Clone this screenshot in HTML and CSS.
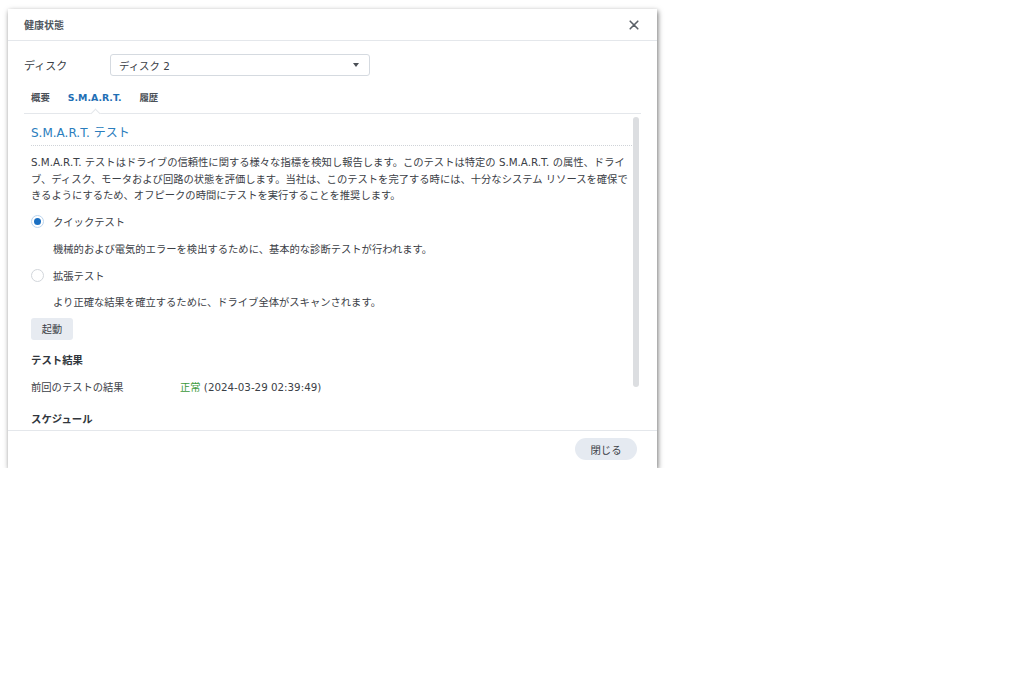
FILE: index.html
```html
<!DOCTYPE html>
<html lang="ja">
<head>
    <meta charset="UTF-8">
    <title>健康状態</title>
    <link rel="stylesheet" href="styles.css">
</head>
<body>
    <div class="dialog">
        <div class="dialog-header">
            <span class="dialog-title">健康状態</span>
            <span class="close">
                <svg width="10" height="10" viewBox="0 0 10 10"><path d="M1.2 1.2L8.8 8.8M8.8 1.2L1.2 8.8" stroke="#5b6168" stroke-width="1.6" stroke-linecap="round"/></svg>
            </span>
        </div>

        <div class="dialog-body">
            <div class="disk-row">
                <span class="disk-label">ディスク</span>
                <div class="select">
                    <span>ディスク 2</span>
                    <span class="caret"></span>
                </div>
            </div>

            <!-- タブ -->
            <div class="tabs">
                <span class="tab">概要</span>
                <span class="tab active">S.M.A.R.T.</span>
                <span class="tab">履歴</span>
            </div>

            <div class="panel-wrap">
                <div class="panel">
                    <div class="section-title">S.M.A.R.T. テスト</div>
                    <p class="desc">S.M.A.R.T. テストはドライブの信頼性に関する様々な指標を検知し報告します。このテストは特定の S.M.A.R.T. の属性、ドライ<br>ブ、ディスク、モータおよび回路の状態を評価します。当社は、このテストを完了する時には、十分なシステム リソースを確保で<br>きるようにするため、オフピークの時間にテストを実行することを推奨します。</p>

                    <div class="radio-row">
                        <span class="radio checked"></span>
                        <span>クイックテスト</span>
                    </div>
                    <div class="radio-desc">機械的および電気的エラーを検出するために、基本的な診断テストが行われます。</div>

                    <div class="radio-row">
                        <span class="radio"></span>
                        <span>拡張テスト</span>
                    </div>
                    <div class="radio-desc">より正確な結果を確立するために、ドライブ全体がスキャンされます。</div>

                    <button class="btn">起動</button>

                    <div class="subhead">テスト結果</div>
                    <div class="field">
                        <span class="field-label">前回のテストの結果</span>
                        <span><span class="ok">正常</span> (2024-03-29 02:39:49)</span>
                    </div>

                    <div class="subhead schedule">スケジュール</div>
                </div>
                <div class="scroll-thumb"></div>
            </div>
        </div>

        <div class="dialog-footer">
            <button class="btn-pill">閉じる</button>
        </div>
    </div>
</body>
</html>
```

FILE: styles.css
```css
body {
    margin: 0;
    padding: 0;
    background-color: #ffffff;
    font-family: "DejaVu Sans", "Noto Sans CJK JP", sans-serif;
    font-size: 10.3px;
    color: #3b4046;
}

.dialog {
    width: 649px;
    height: 459px;
    margin: 9px 0 0 8px;
    background-color: #ffffff;
    box-shadow: 1px 2px 5px rgba(0, 0, 0, 0.55);
    display: flex;
    flex-direction: column;
}

.dialog-header {
    height: 31px;
    border-bottom: 1px solid #e4e7eb;
    display: flex;
    align-items: center;
    justify-content: space-between;
    padding: 0 18px 0 16px;
    flex-shrink: 0;
}

.dialog-title {
    font-size: 10px;
    font-weight: bold;
    color: #50565d;
}

.close {
    display: flex;
    margin-top: 1px;
}

.dialog-body {
    flex: 1;
    padding: 0 16px;
    display: flex;
    flex-direction: column;
    min-height: 0;
}

.disk-row {
    display: flex;
    align-items: center;
    margin-top: 13px;
}

.disk-label {
    width: 86px;
    font-size: 11px;
    color: #3b4046;
}

.select {
    width: 242px;
    height: 20px;
    border: 1px solid #d5dae0;
    border-radius: 3px;
    display: flex;
    align-items: center;
    justify-content: space-between;
    padding: 0 8px 0 8px;
    font-size: 10.4px;
}

.caret {
    width: 0;
    height: 0;
    border-left: 3.5px solid transparent;
    border-right: 3.5px solid transparent;
    border-top: 4px solid #4a4f55;
    margin-right: 2px;
}

.tabs {
    display: flex;
    gap: 18px;
    margin-top: 12px;
    padding: 0 7px 5px;
    border-bottom: 1px solid #e4e7eb;
}

.tab {
    position: relative;
    line-height: 20px;
    font-weight: bold;
    font-size: 9.4px;
    color: #4a5057;
}

.tab.active {
    color: #1f6fb5;
}

.tab.active::after {
    content: "";
    position: absolute;
    left: 50%;
    bottom: -9px;
    width: 6px;
    height: 6px;
    margin-left: -3px;
    background-color: #ffffff;
    border-left: 1px solid #e4e7eb;
    border-top: 1px solid #e4e7eb;
    transform: rotate(45deg);
}

.panel-wrap {
    position: relative;
    flex: 1;
    min-height: 0;
}

.panel {
    height: 100%;
    overflow: hidden;
    padding: 0 4px 0 7px;
}

.scroll-thumb {
    position: absolute;
    top: 3px;
    right: 2px;
    width: 6px;
    height: 270px;
    border-radius: 3px;
    background-color: #dcdee1;
}

.section-title {
    margin-top: 9px;
    margin-right: 5px;
    line-height: 20px;
    font-size: 12px;
    color: #2a7dbd;
    padding-bottom: 2px;
    border-bottom: 1px dotted #cfd3d8;
}

.desc {
    margin: 8px 0 0;
    line-height: 16.5px;
    white-space: nowrap;
}

.radio-row {
    display: flex;
    align-items: center;
    gap: 9px;
    height: 20px;
    margin-top: 8px;
}

.radio {
    width: 11px;
    height: 11px;
    border: 1px solid #d2d6db;
    border-radius: 50%;
    background-color: #ffffff;
    display: flex;
    align-items: center;
    justify-content: center;
}

.radio.checked {
    border-color: #bcd5ee;
}

.radio.checked::after {
    content: "";
    width: 7px;
    height: 7px;
    border-radius: 50%;
    background-color: #1a6fc2;
}

.radio-desc {
    margin-top: 9px;
    padding-left: 22px;
    line-height: 16.5px;
}

.btn {
    display: block;
    margin-top: 7px;
    width: 42px;
    height: 22px;
    border: none;
    border-radius: 3px;
    background-color: #e7ebf1;
    font-family: inherit;
    font-size: 10.2px;
    color: #3b4046;
    padding: 0;
}

.subhead {
    margin-top: 10px;
    line-height: 20px;
    font-weight: bold;
    font-size: 10.4px;
    color: #31363c;
}

.subhead.schedule {
    margin-top: 12px;
}

.field {
    display: flex;
    margin-top: 7px;
    line-height: 20px;
}

.field-label {
    width: 149px;
}

.ok {
    color: #3c9a3c;
}

.dialog-footer {
    height: 38px;
    border-top: 1px solid #e4e7eb;
    display: flex;
    justify-content: flex-end;
    align-items: flex-start;
    padding: 7px 20px 0 0;
    box-sizing: border-box;
    flex-shrink: 0;
}

.btn-pill {
    width: 62px;
    height: 22px;
    border: none;
    border-radius: 11px;
    background-color: #e5eaf1;
    font-family: inherit;
    font-size: 10.4px;
    color: #3b4046;
    padding: 0;
}
```
